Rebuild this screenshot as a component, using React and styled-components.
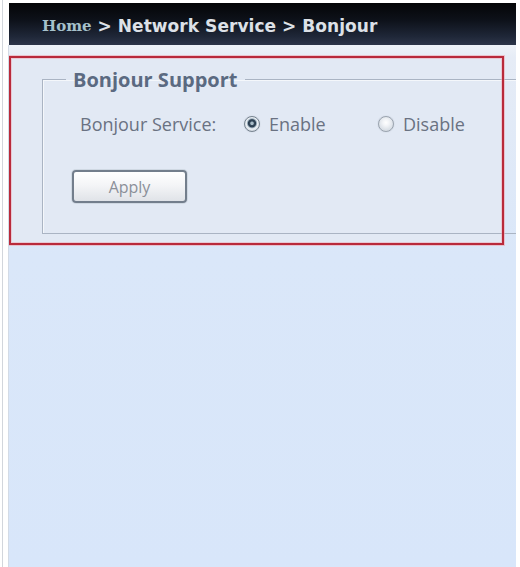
import React from "react";
import styled, { createGlobalStyle } from "styled-components";

const Global = createGlobalStyle`
  * { box-sizing: border-box; }
  html, body { margin: 0; padding: 0; background: #ffffff; }
  body { font-family: "Open Sans", "DejaVu Sans", sans-serif; }
`;

const Page = styled.div`
  width: 520px;
  height: 567px;
  display: flex;
  flex-direction: column;
  padding: 3px 4px 0 8px;
  background: linear-gradient(to right, #ffffff 2px, #d2d6dc 2px, #d2d6dc 3px, #ffffff 3px);
`;

const Header = styled.div`
  height: 42px;
  margin-left: 1px;
  flex: none;
  display: flex;
  align-items: center;
  padding-left: 33px;
  padding-top: 3px;
  background: linear-gradient(to bottom, #040507 0%, #0d1119 40%, #1f2738 80%, #2d3549 100%);
  white-space: nowrap;
`;

const Crumb = styled.span`
  font-family: ${(p) => (p.$home ? '"DejaVu Serif", "Liberation Serif", serif' : '"DejaVu Sans", "Liberation Sans", sans-serif')};
  font-weight: bold;
  font-size: ${(p) => (p.$home ? "15px" : "17px")};
  color: ${(p) => (p.$home ? "#a6c1cb" : "#dde1e7")};
  letter-spacing: ${(p) => (p.$home ? "0" : "0.05px")};
`;

const Content = styled.div`
  flex: 1;
  overflow: hidden;
  padding-top: 11px;
  background: linear-gradient(to bottom, #eef2f8 0px, #e6ecf6 12px, #dae7f9 210px, #d8e6fa 100%);
  border-left: 1px solid #d3dbe6;
`;

const Highlight = styled.div`
  position: relative;
  width: 495px;
  height: 189px;
  padding: 12px 0 0 33px;
  background: #e2e9f4;

  &::after {
    content: "";
    position: absolute;
    inset: 0;
    border: 2px solid #b92a3b;
    box-shadow: 0 0 0 1px rgba(240, 160, 170, 0.55), inset 0 0 0 1px rgba(240, 160, 170, 0.45);
    pointer-events: none;
    z-index: 1;
  }
`;

const Fieldset = styled.fieldset`
  margin: 0;
  padding: 0;
  width: 482px;
  min-width: 0;
  border: 1px solid #aab4c3;
  box-shadow: inset 1px 1px 0 #f4f7fb;
`;

const Legend = styled.legend`
  margin-left: 23px;
  padding: 0 7px;
  font-family: "Open Sans", "DejaVu Sans", sans-serif;
  font-weight: 700;
  font-size: 20px;
  line-height: 23px;
  color: #5b6a81;
`;

const Body = styled.div`
  padding: 20px 0 30px 29px;
`;

const Row = styled.div`
  display: flex;
  align-items: center;
  height: 26px;
  padding-left: 8px;
  font-size: 18px;
  color: #6a7282;
`;

const Label = styled.span`
  width: 164px;
  flex: none;
`;

const Option = styled.label`
  display: flex;
  align-items: center;
  gap: 9px;
  width: ${(p) => p.$w}px;
  flex: none;
`;

const Radio = styled.span`
  width: 16px;
  height: 16px;
  border-radius: 50%;
  flex: none;
  border: 1px solid ${(p) => (p.$on ? "#76838f" : "#9aa3ae")};
  background: ${(p) =>
    p.$on
      ? "radial-gradient(circle at 50% 45%, #a9bcc8 0 1.3px, #34495c 2.2px, #2a3c4e 3.6px, #a0b2c0 4.6px, #eef2f6 5.6px, #d2d9e2 7.5px)"
      : "radial-gradient(circle at 50% 40%, #ffffff 0, #f3f5f8 3px, #d9dfe6 7.5px)"};
  box-shadow: 0 0 1px rgba(120, 130, 145, 0.5);
`;

const Button = styled.button`
  display: block;
  width: 115px;
  height: 33px;
  margin-top: 33px;
  padding: 0;
  border: 2px solid #737e8c;
  border-radius: 4px;
  background: linear-gradient(to bottom, #ffffff 0%, #f4f5f7 45%, #e0e3e8 100%);
  box-shadow: 0 0 0 1px rgba(200, 208, 218, 0.7);
  font-family: "Open Sans", "DejaVu Sans", sans-serif;
  font-size: 16px;
  color: #8b9099;
  cursor: pointer;
`;

export default function App() {
  return (
    <>
      <Global />
      <Page>
        <Header>
          <Crumb $home>Home</Crumb>
          <Crumb>&nbsp;&gt; Network Service &gt; Bonjour</Crumb>
        </Header>
        <Content>
          <Highlight>
            <Fieldset>
              <Legend>Bonjour Support</Legend>
              <Body>
                <Row>
                  <Label>Bonjour Service:</Label>
                  <Option $w={134}>
                    <Radio $on />
                    Enable
                  </Option>
                  <Option $w={100}>
                    <Radio />
                    Disable
                  </Option>
                </Row>
                <Button>Apply</Button>
              </Body>
            </Fieldset>
          </Highlight>
        </Content>
      </Page>
    </>
  );
}
